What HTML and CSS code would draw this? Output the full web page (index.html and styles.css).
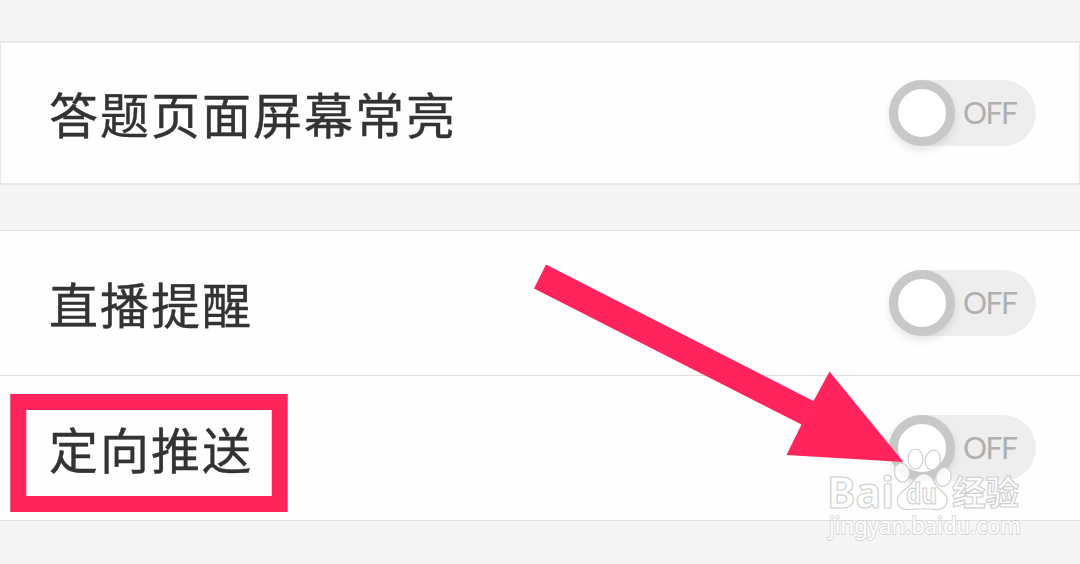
FILE: index.html
```
<!DOCTYPE html>
<html lang="zh-CN">
<head>
  <meta charset="UTF-8" />
  <meta name="viewport" content="width=device-width, initial-scale=1.0" />
  <title>设置</title>
  <link rel="stylesheet" href="styles.css">
</head>
<body>

  <div class="settings">
    <div class="group boxed">
      <div class="row">
        <span class="label">答题页面屏幕常亮</span>
        <div class="switch"><span class="knob"></span><span class="state">OFF</span></div>
      </div>
    </div>

    <div class="group">
      <div class="row">
        <span class="label">直播提醒</span>
        <div class="switch"><span class="knob"></span><span class="state">OFF</span></div>
      </div>
      <div class="row">
        <span class="label">定向推送</span>
        <div class="switch"><span class="knob"></span><span class="state">OFF</span></div>
      </div>
    </div>
  </div>

  <!-- frame, arrow and watermark lie over the list -->
  <svg class="overlay" width="1080" height="564" viewBox="0 0 1080 564">
    <rect class="frame" x="18.25" y="402" width="261.5" height="102" />
    <path class="arrow" d="M546 264.5 L813.5 401 L829.5 371.5 L903.5 462 L786.5 455 L801.5 424.5 L534 288.5 Z" />
    <path class="seam" d="M813.5 401 L801.5 424.5" />

    <g class="mark">
      <text class="bai" x="827" y="508" textLength="67" lengthAdjust="spacingAndGlyphs">Bai</text>
      <ellipse cx="902" cy="472.5" rx="7.5" ry="9.5" transform="rotate(-12 902 472.5)" />
      <ellipse cx="915.5" cy="459" rx="7.5" ry="10" />
      <ellipse cx="932.8" cy="460" rx="7.5" ry="10" transform="rotate(12 932.8 460)" />
      <ellipse cx="943.5" cy="477" rx="7.5" ry="9.5" transform="rotate(14 943.5 477)" />
      <path d="M924 474 C917 474 915 480 910 485 C904 491 898 493 897.5 500 C897 507 903 510.5 910 509.5 C916 508.5 930 508.5 935 509.5 C942 510.500 947.5 506 947 499 C946.500 493 940 491 936 485 C933 480 931 474 924 474 Z" />
      <text class="du" x="906" y="503.5" textLength="31" lengthAdjust="spacingAndGlyphs">du</text>
      <text class="jingyan" x="952" y="505" textLength="67" lengthAdjust="spacingAndGlyphs">经验</text>
      <text class="url" x="829" y="534" textLength="192" lengthAdjust="spacingAndGlyphs">jingyan.baidu.com</text>
    </g>
  </svg>

</body>
</html>
```
FILE: styles.css
```
* {
  box-sizing: border-box;
}
body {
  margin: 0;
  height: 564px;
  overflow: hidden;
  background-color: #f5f5f5;
  font-family: "Noto Sans CJK SC", sans-serif;
  position: relative;
}
.settings {
  display: flex;
  flex-direction: column;
  gap: 45px;
  padding-top: 41px;
}
.group {
  background: #fefefe;
  border-top: 1px solid #e2e2e2;
  border-bottom: 1px solid #e2e2e2;
}
.group.boxed {
  border: 2px solid #e8e8e8;
  border-width: 2px 1px;
}
.row {
  display: flex;
  justify-content: space-between;
  align-items: center;
  height: 144px;
  padding: 0 44px 0 49px;
}
.boxed .row {
  height: 140px;
  padding: 0 43px 0 48px;
}
.row + .row {
  height: 145px;
  border-top: 1px solid #e2e2e2;
}
.label {
  font-size: 49px;
  line-height: 60px;
  letter-spacing: 2px;
  color: #333;
  -webkit-text-stroke: 0.4px #333;
}

/* Switch */
.switch {
  display: flex;
  align-items: center;
  width: 147px;
  height: 66px;
  border-radius: 33px;
  background: #eeeeee;
}
.knob {
  width: 66px;
  height: 66px;
  border: 9px solid #c8c8c8;
  border-radius: 50%;
  background: #fff;
  box-shadow: 0 4px 8px rgba(0, 0, 0, 0.1);
}
.state {
  margin-left: 8px;
  padding-bottom: 2px;
  font-family: Lato, sans-serif;
  font-size: 30px;
  letter-spacing: -1.5px;
  color: #b0b0b0;
}

.overlay {
  position: absolute;
  top: 0;
  left: 0;
}
.frame {
  fill: none;
  stroke: #ff245c;
  stroke-width: 16px;
}
.arrow {
  fill: #ff245c;
}
.seam {
  stroke: #e7486f;
  stroke-width: 0.5px;
}

/* Watermark */
.mark {
  fill: rgba(255, 255, 255, 0.85);
  stroke: #d0d0d0;
  stroke-width: 1.2px;
}
.bai {
  font: bold 43px "Noto Sans", sans-serif;
}
.du {
  font: bold 28px "Noto Sans", sans-serif;
}
.jingyan {
  font: bold 34px "Noto Sans CJK SC", sans-serif;
}
.url {
  font: 23px "Noto Sans", sans-serif;
  fill: #fff;
  stroke: #d6d6d6;
  stroke-width: 1.8px;
  paint-order: stroke;
}
```
